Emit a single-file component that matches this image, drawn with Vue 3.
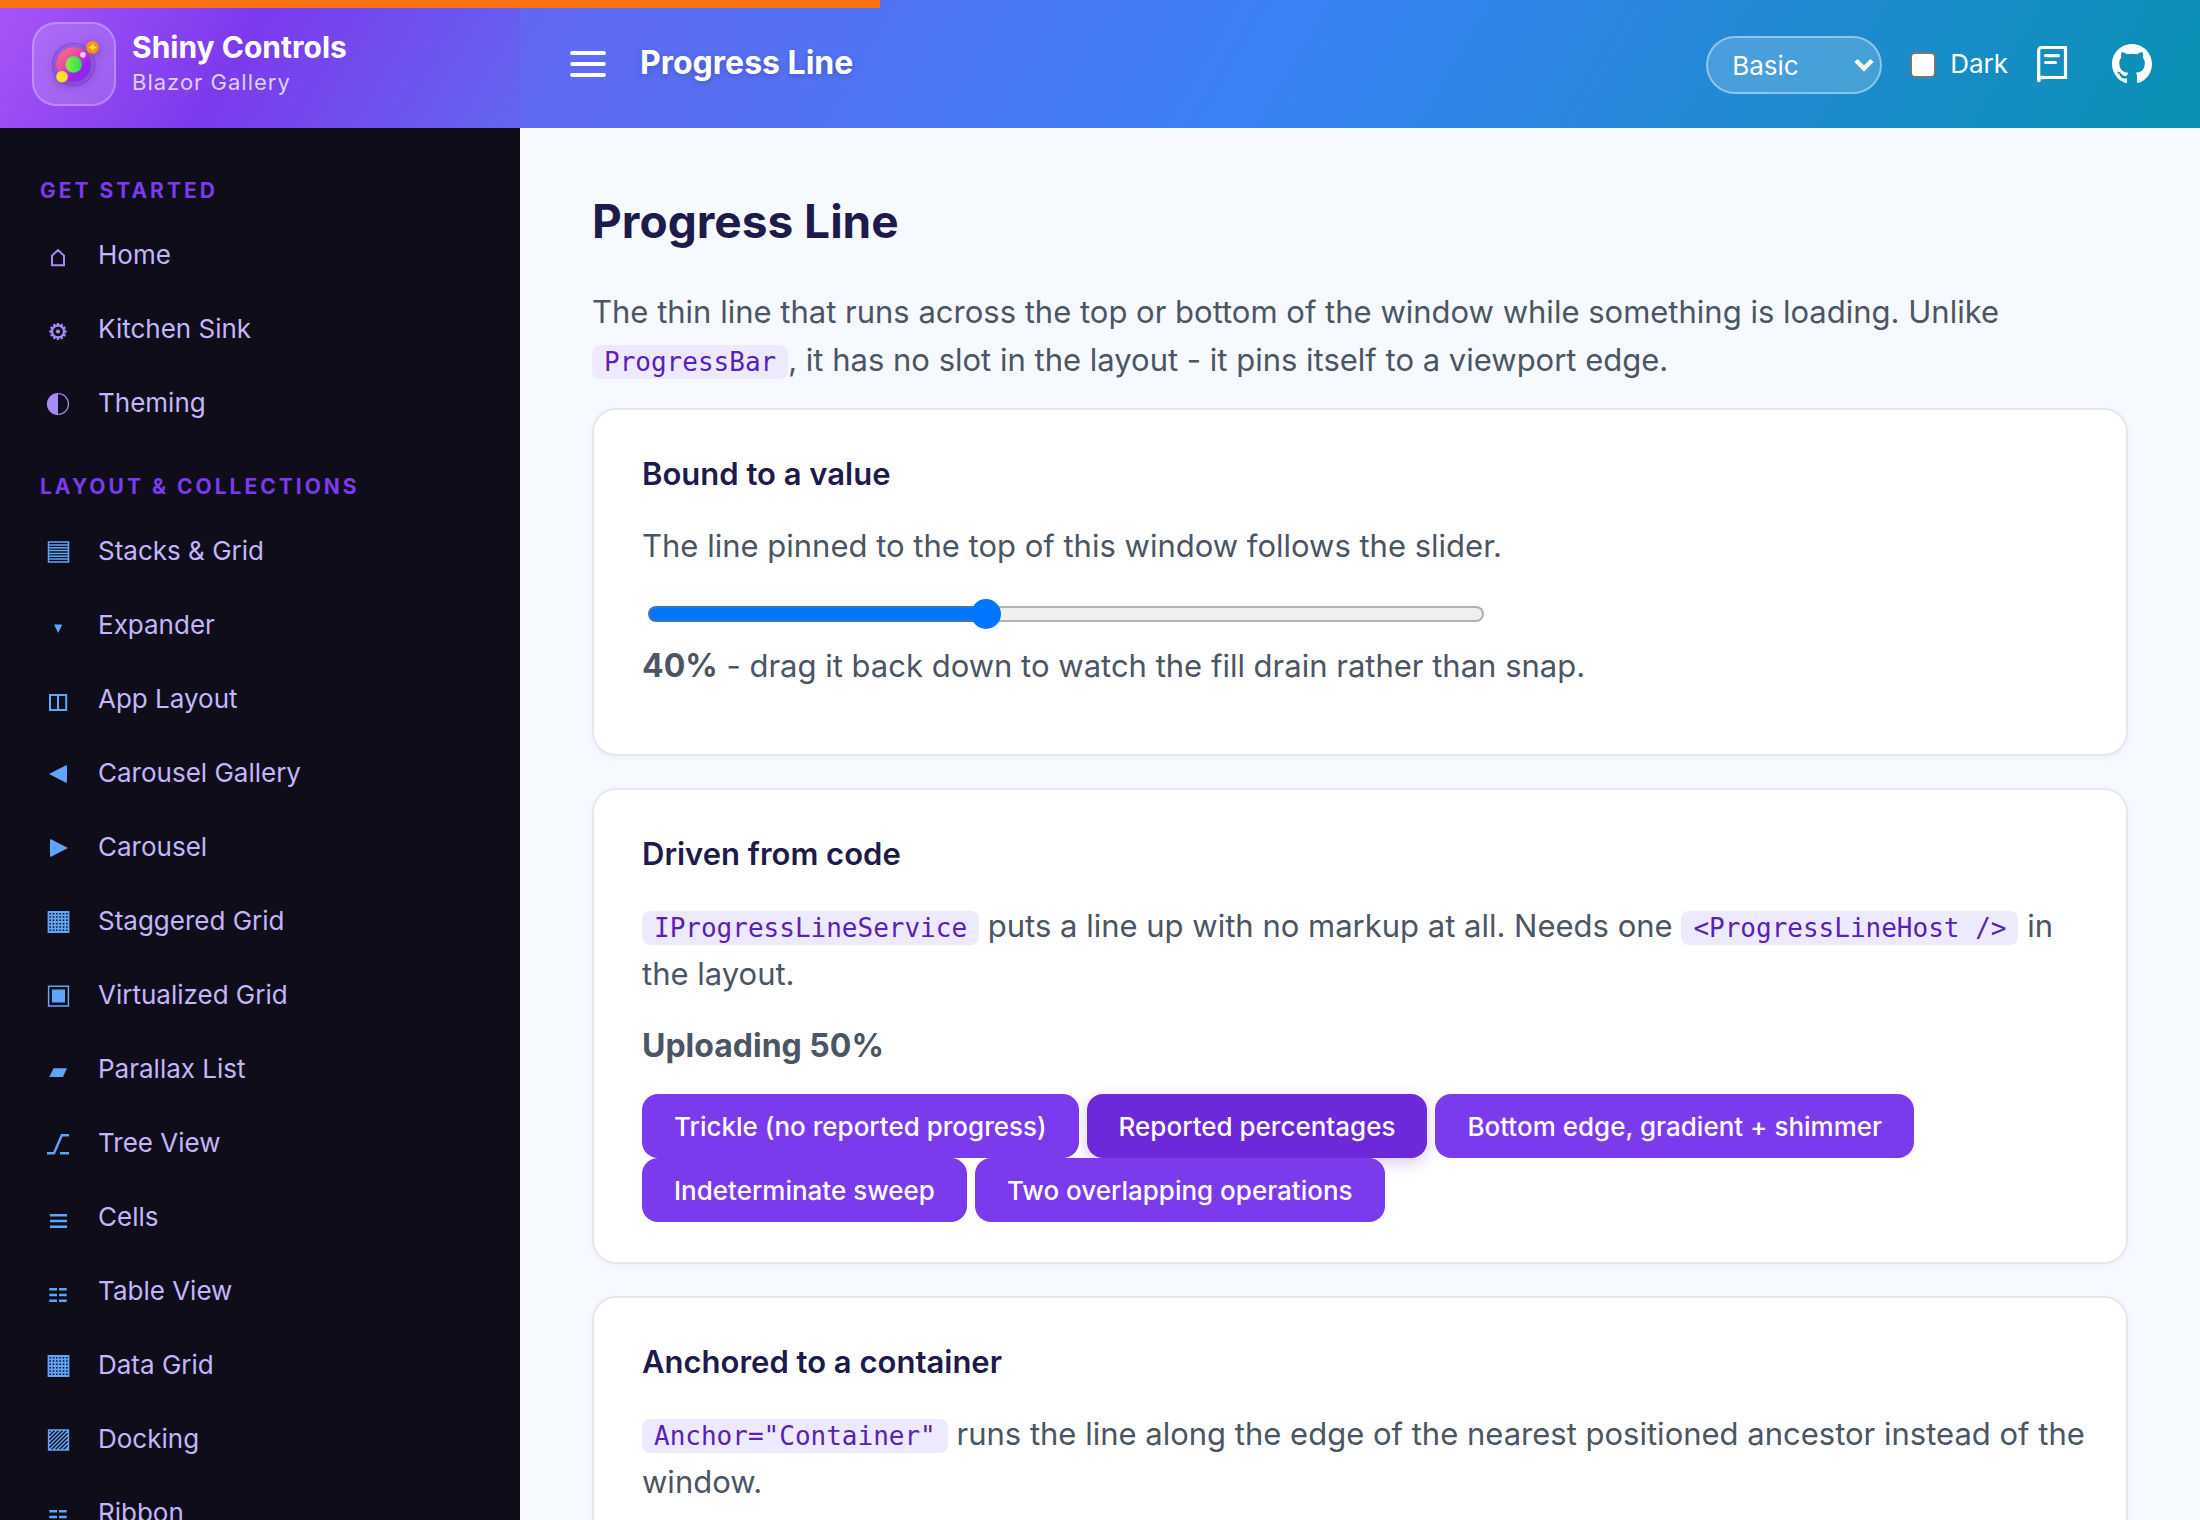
<template>
  <div class="layout">
    <div class="progress-line" :style="{ width: progress + '%' }"></div>

    <aside class="sidebar">
      <div class="brand">
        <div class="brand-logo">
          <svg viewBox="0 0 80 80" aria-hidden="true">
            <defs>
              <linearGradient id="planet" x1="0" y1="0" x2="1" y2="1">
                <stop offset="0.1" stop-color="#ff6b7b" />
                <stop offset="0.4" stop-color="#e64aa5" />
                <stop offset="0.65" stop-color="#a020f0" />
                <stop offset="1" stop-color="#7c2df5" />
              </linearGradient>
              <linearGradient id="core" x1="0" y1="0" x2="1" y2="0">
                <stop offset="0" stop-color="#84f03c" />
                <stop offset="1" stop-color="#2fdc5a" />
              </linearGradient>
            </defs>
            <circle cx="39.7" cy="40.5" r="21" fill="none" stroke="#7c3aed" stroke-opacity="0.8" stroke-width="1.2" />
            <circle cx="39.7" cy="40.5" r="17.3" fill="url(#planet)" />
            <circle cx="39.7" cy="40.5" r="8.2" fill="url(#core)" />
            <circle cx="49" cy="30.7" r="2.8" fill="#f5d0fe" />
            <circle cx="28" cy="52.7" r="5.8" fill="#fde02f" />
            <circle cx="58.5" cy="23.4" r="6.4" fill="#fb8c1e" />
            <path d="M58.5 19L59.900 22L62.900 23.400L59.900 24.800L58.500 27.800L57.100 24.800L54.100 23.400L57.100 22Z" fill="#fde02f" />
          </svg>
        </div>
        <div class="brand-text">
          <span class="brand-name">Shiny Controls</span>
          <span class="brand-sub">Blazor Gallery</span>
        </div>
      </div>

      <nav class="nav">
        <section v-for="group in groups" :key="group.title" :class="['nav-group', group.tone]">
          <h2 class="nav-title">{{ group.title }}</h2>
          <a v-for="item in group.items" :key="item.label" href="#" class="nav-item">
            <svg class="nav-icon" viewBox="0 0 24 28" aria-hidden="true">
              <path v-if="icons[item.icon].fill" :d="icons[item.icon].fill" fill="currentColor" />
              <path
                v-if="icons[item.icon].line"
                :d="icons[item.icon].line"
                fill="none"
                stroke="currentColor"
                :stroke-width="icons[item.icon].width"
              />
            </svg>
            <span class="nav-label">{{ item.label }}</span>
          </a>
        </section>
      </nav>
    </aside>

    <div class="page">
      <header class="topbar">
        <button class="menu-btn" type="button" aria-label="Toggle menu">
          <svg viewBox="0 0 40 28" aria-hidden="true">
            <path d="M4 3H36M4 14H36M4 25H36" stroke="#fff" stroke-width="3.8" stroke-linecap="round" />
          </svg>
        </button>
        <span class="topbar-title">Progress Line</span>

        <div class="topbar-actions">
          <div class="select-wrap">
            <select v-model="theme" class="theme-select" aria-label="Theme">
              <option v-for="t in themes" :key="t" :value="t">{{ t }}</option>
            </select>
            <svg class="select-arrow" viewBox="0 0 20 14" aria-hidden="true">
              <path d="M2 2.5L10 10.5L18 2.5" fill="none" stroke="#fff" stroke-width="4.5" />
            </svg>
          </div>
          <label class="dark-toggle">
            <input v-model="dark" type="checkbox" />
            <span>Dark</span>
          </label>
          <a href="#" class="icon-link" aria-label="Documentation">
            <svg viewBox="0 0 40 40" fill="none" stroke="#fff" aria-hidden="true">
              <path d="M6.700 36V6.500a3 3 0 0 1 3-3H33.500V33.500H9.500" stroke-width="3.2" />
              <path d="M6.900 36.500V33.500H12" stroke-width="3.6" stroke-linecap="round" />
              <path d="M13.600 11.700H26.400M13.600 18.500H23.400" stroke-width="3.2" stroke-linecap="round" />
            </svg>
          </a>
          <a href="#" class="icon-link" aria-label="GitHub">
            <svg viewBox="0 0 16 16" fill="#fff" aria-hidden="true">
              <path d="M8 0C3.58 0 0 3.58 0 8c0 3.54 2.29 6.53 5.47 7.59.4.07.55-.17.55-.38 0-.19-.01-.82-.01-1.49-2.01.37-2.53-.49-2.69-.94-.09-.23-.48-.94-.82-1.13-.28-.15-.68-.52-.01-.53.63-.01 1.08.58 1.23.82.72 1.21 1.87.87 2.33.66.07-.52.28-.87.51-1.07-1.78-.2-3.64-.89-3.64-3.95 0-.87.31-1.59.82-2.15-.08-.2-.36-1.02.08-2.12 0 0 .67-.21 2.2.82.64-.18 1.32-.27 2-.27s1.36.09 2 .27c1.53-1.04 2.2-.82 2.2-.82.44 1.1.16 1.92.08 2.12.51.56.82 1.27.82 2.15 0 3.07-1.87 3.75-3.65 3.95.29.25.54.73.54 1.48 0 1.07-.01 1.93-.01 2.2 0 .21.15.46.55.38A8.01 8.01 0 0 0 16 8c0-4.42-3.58-8-8-8z" />
            </svg>
          </a>
        </div>
      </header>

      <main class="content">
        <h1>Progress Line</h1>
        <p>
          The thin line that runs across the top or bottom of the window while something is loading. Unlike
          <code>ProgressBar</code>, it has no slot in the layout - it pins itself to a viewport edge.
        </p>

        <section class="card">
          <h3>Bound to a value</h3>
          <p id="slider-hint">The line pinned to the top of this window follows the slider.</p>
          <div class="slider-row">
            <input
              v-model.number="progress"
              type="range"
              min="0"
              max="100"
              class="slider"
              aria-labelledby="slider-hint"
              :style="{ '--value': progress + '%' }"
            />
          </div>
          <p><strong>{{ progress }}%</strong> - drag it back down to watch the fill drain rather than snap.</p>
        </section>

        <section class="card">
          <h3>Driven from code</h3>
          <p>
            <code>IProgressLineService</code> puts a line up with no markup at all. Needs one
            <code>&lt;ProgressLineHost /&gt;</code> in the layout.
          </p>
          <p><strong>Uploading 50%</strong></p>
          <div class="buttons">
            <button
              v-for="op in operations"
              :key="op"
              type="button"
              :class="['btn', { active: op === current }]"
              @click="current = op"
            >
              {{ op }}
            </button>
          </div>
        </section>

        <section class="card">
          <h3>Anchored to a container</h3>
          <p>
            <code>Anchor="Container"</code> runs the line along the edge of the nearest positioned ancestor instead of
            the window.
          </p>
        </section>
      </main>
    </div>
  </div>
</template>

<script setup>
import { ref } from 'vue'

const progress = ref(40)
const dark = ref(false)
const theme = ref('Basic')
const themes = ['Basic', 'Material', 'Fluent']

const operations = [
  'Trickle (no reported progress)',
  'Reported percentages',
  'Bottom edge, gradient + shimmer',
  'Indeterminate sweep',
  'Two overlapping operations'
]
const current = ref('Reported percentages')

const groups = [
  {
    title: 'Get Started',
    tone: 'violet',
    items: [
      { label: 'Home', icon: 'home' },
      { label: 'Kitchen Sink', icon: 'gear' },
      { label: 'Theming', icon: 'contrast' }
    ]
  },
  {
    title: 'Layout & Collections',
    tone: 'blue',
    items: [
      { label: 'Stacks & Grid', icon: 'rows' },
      { label: 'Expander', icon: 'down' },
      { label: 'App Layout', icon: 'split' },
      { label: 'Carousel Gallery', icon: 'left' },
      { label: 'Carousel', icon: 'right' },
      { label: 'Staggered Grid', icon: 'grid' },
      { label: 'Virtualized Grid', icon: 'nested' },
      { label: 'Parallax List', icon: 'slant' },
      { label: 'Tree View', icon: 'branch' },
      { label: 'Cells', icon: 'lines' },
      { label: 'Table View', icon: 'columns' },
      { label: 'Data Grid', icon: 'grid' },
      { label: 'Docking', icon: 'hatch' },
      { label: 'Ribbon', icon: 'columns' }
    ]
  }
]

// gear teeth are short spokes round the rim
const teeth = Array.from({ length: 12 }, (_, i) => {
  const a = (i * Math.PI) / 6
  const point = (r) => `${(12 + r * Math.cos(a)).toFixed(2)} ${(16.5 + r * Math.sin(a)).toFixed(2)}`
  return `M${point(6)}L${point(8.6)}`
}).join('')

const icons = {
  home: { line: 'M6 24.2V14.6L12 9L18 14.6V24.2Z', width: 2 },
  gear: {
    fill: 'M9.9 16.5a2.1 2.1 0 1 0 4.2 0a2.1 2.1 0 1 0 -4.2 0Z',
    line: `M6 16.5a6 6 0 1 0 12 0a6 6 0 1 0 -12 0Z${teeth}`,
    width: 2.3
  },
  contrast: {
    fill: 'M12 4.5a10.5 10.5 0 0 0 0 21Z',
    line: 'M12 4.5a10.5 10.5 0 0 1 0 21a10.5 10.5 0 0 1 0 -21Z',
    width: 1.2
  },
  rows: { line: 'M2.5 5H22.5V25H2.5ZM3 7.9H22M3 10.7H22M3 13.6H22M3 16.4H22M3 19.3H22M3 22.1H22', width: 1.5 },
  down: { fill: 'M8 13.5H16.3L12.15 22Z' },
  split: { line: 'M4 10H20.2V25H4ZM12 10V25', width: 2 },
  left: { fill: 'M3 15L20 6.2Q21 6 21 7V23Q21 24 20 23.8Z' },
  right: { fill: 'M22 15L5 6.2Q4 6 4 7V23Q4 24 5 23.8Z' },
  grid: {
    line: 'M2.5 5H22.5V25H2.5ZM3 8.3H22M3 11.7H22M3 15H22M3 18.3H22M3 21.7H22M5.8 5V25M9.2 5V25M12.5 5V25M15.8 5V25M19.2 5V25',
    width: 1.8
  },
  nested: { fill: 'M6 8.5H19V21.5H6Z', line: 'M2.6 5.2H22.4V25H2.6Z', width: 1.5 },
  slant: { fill: 'M7.5 13.2H21L17 22H3.3Z' },
  branch: { line: 'M1 24.2H8L15.8 6.2H23M14 24.2H23', width: 2.4 },
  lines: { line: 'M4 12.3H21M4 18H21M4 23.7H21', width: 2.6 },
  columns: { line: 'M3.3 12.3H11M13 12.3H20.7M3.3 18H11M13 18H20.7M3.3 23.7H11M13 23.7H20.7', width: 2.4 },
  hatch: {
    line: 'M2.6 5H22.4V25H2.6ZM3 9L7 5M3 13L11 5M3 17L15 5M3 21L19 5M3 25L22.5 5.5M7 25L22.5 9.5M11 25L22.5 13.5M15 25L22.5 17.5M19 25L22.5 21.5',
    width: 1.5
  }
}
</script>

<style>
body {
  overflow: hidden;
}
</style>

<style scoped>
.layout {
  display: flex;
  height: 100vh;
  overflow: hidden;
  background: #f6f9ff;
  font-family: Inter, 'Noto Sans', sans-serif;
  color: #4b5563;
}

.layout *,
.layout *::before {
  box-sizing: border-box;
}

.progress-line {
  position: fixed;
  top: 0;
  left: 0;
  z-index: 10;
  height: 8px;
  background: #f97316;
}

/* Sidebar */
.sidebar {
  display: flex;
  flex-direction: column;
  flex: 0 0 520px;
  background: #0f0d1a;
}

.brand {
  display: flex;
  align-items: center;
  gap: 16px;
  flex: 0 0 128px;
  padding: 0 32px;
  background: linear-gradient(120deg, #a855f7 0%, #7c3aed 45%, #6366f1 100%);
}

.brand-logo {
  width: 84px;
  height: 84px;
  border: 2px solid rgba(255, 255, 255, 0.25);
  border-radius: 24px;
  background: rgba(255, 255, 255, 0.15);
}

.brand-logo svg {
  display: block;
  filter: drop-shadow(0 2px 4px rgba(0, 0, 0, 0.3));
}

.brand-text {
  display: flex;
  flex-direction: column;
}

.brand-name {
  color: #fff;
  font-size: 30px;
  font-weight: 700;
  line-height: 36px;
}

.brand-sub {
  color: rgba(255, 255, 255, 0.75);
  font-size: 22px;
  line-height: 34px;
  letter-spacing: 1px;
}

.nav {
  flex: 1;
  min-height: 0;
  padding: 16px 0;
  overflow: hidden;
}

.nav-title {
  margin: 0;
  padding: 32px 40px 12px;
  color: #7c3aed;
  font-size: 21px;
  font-weight: 700;
  line-height: 30px;
  letter-spacing: 3px;
  text-transform: uppercase;
}

.nav-item {
  display: flex;
  align-items: center;
  gap: 28px;
  height: 74px;
  padding: 0 46px;
  color: #c4b5fd;
  font-size: 26px;
  text-decoration: none;
}

.nav-label {
  padding-bottom: 2px;
}

.nav-icon {
  flex: none;
  width: 24px;
  height: 28px;
}

.violet .nav-icon {
  color: #a78bfa;
}

.blue .nav-icon {
  color: #60a5fa;
}

/* Top bar */
.page {
  display: flex;
  flex-direction: column;
  flex: 1;
  min-width: 0;
}

.topbar {
  display: flex;
  align-items: center;
  flex: 0 0 128px;
  padding: 0 48px;
  background: linear-gradient(120deg, #6366f1 0%, #3b82f6 45%, #0891b2 100%);
}

.menu-btn {
  display: flex;
  padding: 0;
  border: none;
  background: none;
  cursor: pointer;
}

.menu-btn svg {
  width: 40px;
  height: 28px;
}

.topbar-title {
  margin-left: 32px;
  padding-bottom: 2px;
  color: #fff;
  font-size: 32px;
  font-weight: 700;
  line-height: 48px;
  text-shadow: 0 2px 6px rgba(0, 0, 0, 0.2);
}

.topbar-actions {
  display: flex;
  align-items: center;
  margin-left: auto;
  color: #fff;
  font-size: 26px;
}

.select-wrap {
  position: relative;
  margin-top: 2px;
}

.theme-select {
  display: block;
  width: 176px;
  height: 58px;
  padding: 0 24px;
  border: 2px solid rgba(255, 255, 255, 0.4);
  border-radius: 29px;
  appearance: none;
  background: rgba(255, 255, 255, 0.18);
  color: #fff;
  font: inherit;
}

.theme-select option {
  color: #1e1b4b;
}

.select-arrow {
  position: absolute;
  top: 22px;
  right: 8px;
  width: 20px;
  height: 14px;
  pointer-events: none;
}

.dark-toggle {
  display: flex;
  align-items: center;
  gap: 14px;
  margin: 0 24px 0 28px;
}

.dark-toggle input {
  width: 26px;
  height: 26px;
  margin: 2px 0 0;
  border: 2px solid #767676;
  border-radius: 5px;
  appearance: none;
  background: #fff;
}

.dark-toggle input:checked {
  background: #0075ff;
}

.dark-toggle span {
  padding-bottom: 2px;
}

.icon-link {
  display: flex;
}

.icon-link + .icon-link {
  margin-left: 40px;
}

.icon-link svg {
  width: 40px;
  height: 40px;
}

/* Content */
.content {
  flex: 1;
  min-height: 0;
  padding: 64px 72px;
  overflow: hidden;
  font-size: 31px;
  line-height: 48px;
}

h1 {
  margin: 0 0 38px;
  color: #1e1b4b;
  font-size: 46px;
  font-weight: 700;
  line-height: 58px;
}

h3 {
  margin: 0 0 24px;
  color: #1e1b4b;
  font-size: 31px;
  font-weight: 600;
}

p {
  margin: 0 0 24px;
}

strong {
  font-size: 32px;
  line-height: 32px;
}

code {
  padding: 2px 12px;
  border-radius: 8px;
  background: #ede9fe;
  color: #5b21b6;
  font-family: 'DejaVu Sans Mono', monospace;
  font-size: 26px;
  line-height: 30px;
}

.card {
  margin-bottom: 32px;
  padding: 40px 32px 40px 48px;
  border: 2px solid #e5e7eb;
  border-radius: 24px;
  background: #fff;
  box-shadow: 0 2px 6px rgba(0, 0, 0, 0.04);
}

.slider-row {
  display: flex;
  height: 48px;
  padding: 5px 6px;
}

.slider {
  width: 836px;
  height: 30px;
  max-width: 100%;
  margin: 0;
  appearance: none;
  background: none;
}

.slider::-webkit-slider-runnable-track {
  box-sizing: border-box;
  height: 16px;
  border: 2px solid rgba(118, 118, 118, 0.5);
  border-radius: 8px;
  background: linear-gradient(90deg, #0075ff var(--value), #efefef var(--value)) border-box;
}

.slider::-webkit-slider-thumb {
  width: 30px;
  height: 30px;
  margin-top: -9px;
  border-radius: 50%;
  appearance: none;
  background: #0075ff;
}

.buttons {
  display: flex;
  flex-wrap: wrap;
  column-gap: 8px;
}

.btn {
  height: 64px;
  padding: 0 32px;
  border: none;
  border-radius: 16px;
  background: #7c3aed;
  color: #fff;
  font-family: inherit;
  font-size: 26px;
  font-weight: 500;
  cursor: pointer;
}

.btn.active {
  background: #6d28d9;
  box-shadow: 0 4px 16px rgba(124, 58, 237, 0.3);
}
</style>
